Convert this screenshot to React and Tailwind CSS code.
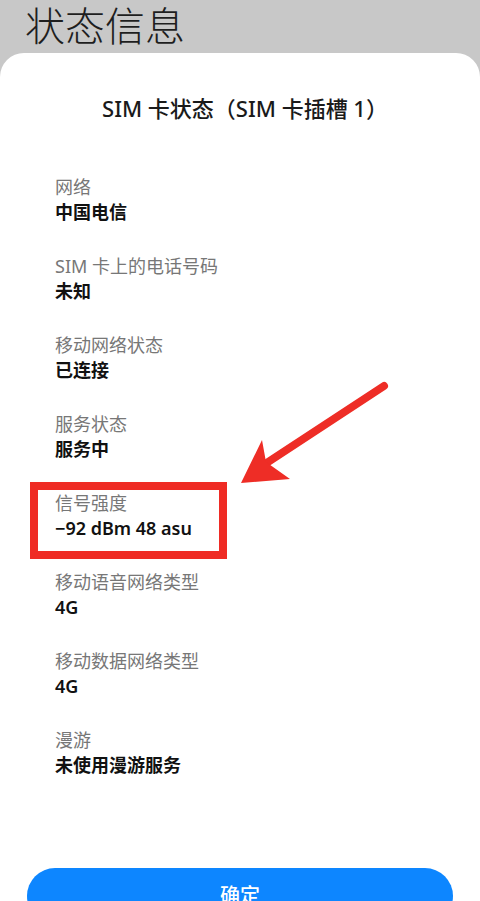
export default function App() {
  const items = [
    ["网络", "中国电信"],
    ["SIM 卡上的电话号码", "未知"],
    ["移动网络状态", "已连接"],
    ["服务状态", "服务中"],
    ["信号强度", "−92 dBm 48 asu"],
    ["移动语音网络类型", "4G"],
    ["移动数据网络类型", "4G"],
    ["漫游", "未使用漫游服务"],
  ];
  const font = { fontFamily: '"Noto Sans", "Noto Sans CJK SC", sans-serif' };
  return (
    <div className="relative w-[480px] h-[901px] overflow-hidden bg-[#c8c8c8]" style={font}>
      <div className="h-[53px] pl-[25px] pt-[1px] text-[40px] leading-[50px] font-light text-[#1e1e1e]">状态信息</div>
      <div className="bg-white rounded-t-[24px] h-[900px] pt-[40px]">
        <div className="h-[30px] leading-[30px] text-center text-[22px] font-medium text-[#1a1a1a] pl-[10px]">
          SIM 卡状态（SIM 卡插槽 1）
        </div>
        <div className="mt-[52px] pl-[55px] flex flex-col gap-[29px]">
          {items.map(([l, v]) => (
            <div key={l}>
              <div className="text-[18px] leading-[25px] text-[#777]">{l}</div>
              <div className="text-[18px] leading-[25px] font-semibold text-[#111]">{v}</div>
            </div>
          ))}
        </div>
        <div className="mt-[90px] mx-[27px] h-[56px] rounded-full bg-[#0d86ff] flex items-center justify-center text-white text-[20px] font-medium">
          确定
        </div>
      </div>
      <div className="absolute left-[30px] top-[482px] w-[197px] h-[77px] border-[8px] border-[#ef2b24]" />
      <svg className="absolute left-0 top-0" width="480" height="901" viewBox="0 0 480 901">
        <line x1="384" y1="386" x2="262" y2="466" stroke="#ee2d26" strokeWidth="8" strokeLinecap="round" />
        <polygon points="241,483 262,440 266,462 290,479" fill="#ee2d26" />
      </svg>
    </div>
  );
}
